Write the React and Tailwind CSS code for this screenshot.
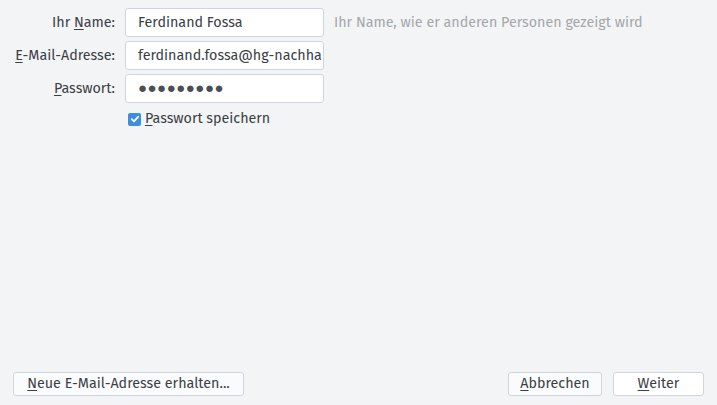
import React from "react";

const U = ({ children }) => <span className="underline underline-offset-2 decoration-1">{children}</span>;

function Row({ label, children, hint }) {
  return (
    <div className="flex items-center h-[29px]">
      <div className="w-[116px] text-right pr-[1px] text-[#3b4046]">{label}</div>
      <div className="ml-[9px]">{children}</div>
      {hint}
    </div>
  );
}

function Field({ children }) {
  return (
    <div className="w-[199px] h-[29px] bg-white border border-[#cfd5df] rounded-[3px] pl-[12px] pr-[2px] flex items-center overflow-hidden whitespace-nowrap text-[#3b4046]">
      {children}
    </div>
  );
}

export default function App() {
  return (
    <div
      className="w-[717px] h-[405px] bg-[#f3f4f6] flex flex-col text-[14.3px]"
      style={{ fontFamily: '"Fira Sans", "Noto Sans", sans-serif' }}
    >
      <div className="flex flex-col gap-[4px] pt-[8px]">
        <Row
          label={<>Ihr <U>N</U>ame:</>}
          hint={<div className="ml-[10px] text-[#a3a7ac]">Ihr Name, wie er anderen Personen gezeigt wird</div>}
        >
          <Field>Ferdinand Fossa</Field>
        </Row>
        <Row label={<><U>E</U>-Mail-Adresse:</>}>
          <Field>ferdinand.fossa@hg-nachha</Field>
        </Row>
        <Row label={<><U>P</U>asswort:</>}>
          <Field>
            <span className="tracking-[0.5px] text-[#4a4f55] text-[15px]">●●●●●●●●●</span>
          </Field>
        </Row>
      </div>
      <div className="flex items-center ml-[128px] mt-[6px] h-[20px]">
        <div className="w-[13px] h-[13px] rounded-[2px] bg-[#3d8ee0] flex items-center justify-center">
          <svg width="10" height="10" viewBox="0 0 10 10">
            <path d="M1.8 5.2 L4 7.3 L8.3 2.6" stroke="white" strokeWidth="1.8" fill="none" strokeLinecap="round" strokeLinejoin="round" />
          </svg>
        </div>
        <span className="ml-[4px] text-[#3b4046]"><U>P</U>asswort speichern</span>
      </div>
      <div className="flex-1" />
      <div className="flex items-center px-[13px] pb-[9px]">
        <button className="w-[231px] h-[24px] bg-[#fafbfc] border border-[#cfd5df] rounded-[3px] text-[#3b4046]">
          <U>N</U>eue E-Mail-Adresse erhalten...
        </button>
        <div className="flex-1" />
        <button className="w-[94px] h-[24px] bg-[#fafbfc] border border-[#cfd5df] rounded-[3px] text-[#3b4046]">
          <U>A</U>bbrechen
        </button>
        <button className="ml-[11px] w-[91px] h-[24px] bg-white border border-[#cfd5df] rounded-[3px] text-[#3b4046]">
          <U>W</U>eiter
        </button>
      </div>
    </div>
  );
}
